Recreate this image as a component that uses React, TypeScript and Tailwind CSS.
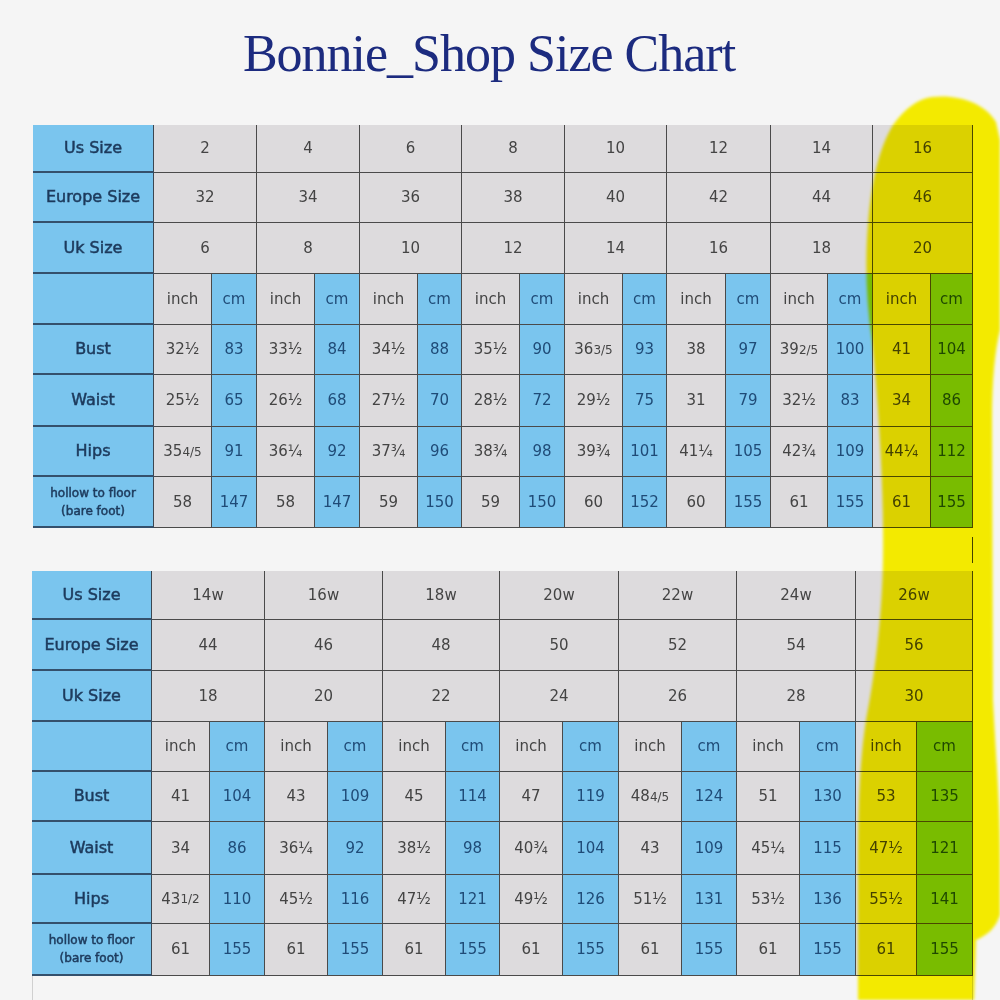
type Pair = [string, string]

type Chart = {
  us: string[]
  eu: string[]
  uk: string[]
  bust: Pair[]
  waist: Pair[]
  hips: Pair[]
  hollow: Pair[]
}

const top: Chart = {
  us: ['2', '4', '6', '8', '10', '12', '14', '16'],
  eu: ['32', '34', '36', '38', '40', '42', '44', '46'],
  uk: ['6', '8', '10', '12', '14', '16', '18', '20'],
  bust: [['32½', '83'], ['33½', '84'], ['34½', '88'], ['35½', '90'], ['36 3/5', '93'], ['38', '97'], ['39 2/5', '100'], ['41', '104']],
  waist: [['25½', '65'], ['26½', '68'], ['27½', '70'], ['28½', '72'], ['29½', '75'], ['31', '79'], ['32½', '83'], ['34', '86']],
  hips: [['35 4/5', '91'], ['36¼', '92'], ['37¾', '96'], ['38¾', '98'], ['39¾', '101'], ['41¼', '105'], ['42¾', '109'], ['44¼', '112']],
  hollow: [['58', '147'], ['58', '147'], ['59', '150'], ['59', '150'], ['60', '152'], ['60', '155'], ['61', '155'], ['61', '155']],
}

const bottom: Chart = {
  us: ['14w', '16w', '18w', '20w', '22w', '24w', '26w'],
  eu: ['44', '46', '48', '50', '52', '54', '56'],
  uk: ['18', '20', '22', '24', '26', '28', '30'],
  bust: [['41', '104'], ['43', '109'], ['45', '114'], ['47', '119'], ['48 4/5', '124'], ['51', '130'], ['53', '135']],
  waist: [['34', '86'], ['36¼', '92'], ['38½', '98'], ['40¾', '104'], ['43', '109'], ['45¼', '115'], ['47½', '121']],
  hips: [['43 1/2', '110'], ['45½', '116'], ['47½', '121'], ['49½', '126'], ['51½', '131'], ['53½', '136'], ['55½', '141']],
  hollow: [['61', '155'], ['61', '155'], ['61', '155'], ['61', '155'], ['61', '155'], ['61', '155'], ['61', '155']],
}

const LABEL =
  'flex items-center justify-center bg-[#7ac5ee] text-[#1d3a5c] text-[16px] [-webkit-text-stroke:0.5px_#1d3a5c] border-b-2 border-r border-b-[#34506c] border-r-[#3c4650]'
const GRAY = 'flex items-center justify-center bg-[#dddbdd] text-[#444] border-b border-r border-[#4a4a4a]'
const BLUE = 'flex items-center justify-center bg-[#7ac5ee] text-[#1f4b77] border-b border-r border-[#4a4a4a]'

// "36 3/5" -> 36 with a small 3/5 after it, as in the printed chart
function Val({ v }: { v: string }) {
  const [whole, frac] = v.split(' ')
  return (
    <>
      {whole}
      {frac && <span className="text-[12px]">{frac}</span>}
    </>
  )
}

function SizeTable({ data, grid }: { data: Chart; grid: string }) {
  const measure = (label: string, vals: Pair[]) => [
    <div key={label} className={LABEL}>
      {label}
    </div>,
    ...vals.flatMap(([inch, cm], i) => [
      <div key={label + i + 'i'} className={GRAY}>
        <Val v={inch} />
      </div>,
      <div key={label + i + 'c'} className={BLUE}>
        {cm}
      </div>,
    ]),
  ]

  const sizeRow = (label: string, vals: string[]) => [
    <div key={label} className={LABEL}>
      {label}
    </div>,
    ...vals.map((v, i) => (
      <div key={label + i} className={GRAY + ' col-span-2'}>
        {v}
      </div>
    )),
  ]

  return (
    <div className={'grid text-[15px] ' + grid}>
      {sizeRow('Us Size', data.us)}
      {sizeRow('Europe Size', data.eu)}
      {sizeRow('Uk Size', data.uk)}
      <div className={LABEL} />
      {data.us.flatMap((_, i) => [
        <div key={'u' + i + 'i'} className={GRAY}>
          inch
        </div>,
        <div key={'u' + i + 'c'} className={BLUE}>
          cm
        </div>,
      ])}
      {measure('Bust', data.bust)}
      {measure('Waist', data.waist)}
      {measure('Hips', data.hips)}
      <div className={LABEL + ' flex-col !text-[12px] leading-[18px] [-webkit-text-stroke:0.3px_#1d3a5c]'}>
        <span>hollow to floor</span>
        <span>(bare foot)</span>
      </div>
      {data.hollow.flatMap(([inch, cm], i) => [
        <div key={'h' + i + 'i'} className={GRAY}>
          {inch}
        </div>,
        <div key={'h' + i + 'c'} className={BLUE}>
          {cm}
        </div>,
      ])}
    </div>
  )
}

export default function App() {
  return (
    <div className="relative h-[1000px] w-[1000px] overflow-hidden bg-[#f5f5f5] font-['DejaVu_Sans',sans-serif]">
      <div className="flex justify-center pt-[28px] pr-[22px]">
        <h1 className="font-['Liberation_Serif',serif] text-[52px] leading-[52px] tracking-[-1px] text-[#1c2b7f]">
          Bonnie_Shop Size Chart
        </h1>
      </div>

      <div className="mt-[45px] ml-[33px] w-[940px]">
        <SizeTable
          data={top}
          grid="grid-cols-[121px_58px_45px_58px_45px_58px_44px_58px_45px_58px_44px_59px_45px_57px_45px_58px_42px] grid-rows-[48px_50px_51px_51px_50px_52px_50px_51px]"
        />
      </div>

      <div className="ml-[32px] flex h-[43px] w-[941px] items-center justify-end">
        <div className="h-[26px] w-px bg-[#444]" />
      </div>

      <div className="ml-[32px] w-[941px]">
        <SizeTable
          data={bottom}
          grid="grid-cols-[120px_58px_55px_63px_55px_63px_54px_63px_56px_63px_55px_63px_56px_61px_56px] grid-rows-[49px_51px_51px_50px_50px_53px_49px_52px]"
        />
        <div className="h-[30px] border-x border-[#d0d0d0]" />
      </div>

      {/* highlighter stroke over the last size column */}
      <svg
        className="pointer-events-none absolute inset-0 mix-blend-multiply"
        width="1000"
        height="1000"
        viewBox="0 0 1000 1000"
      >
        <defs>
          <filter id="soft">
            <feGaussianBlur stdDeviation="1.6" />
          </filter>
        </defs>
        <path
          filter="url(#soft)"
          fill="#fdf400"
          d="M932 97 C958 94 985 103 996 122 L1000 140 L1000 330 C995 350 992 380 992 420 L993 700 C996 760 1000 800 1000 860 L1000 915 C995 930 985 936 976 940 L974 1000 L858 1000 L858 880 C858 800 860 760 866 720 C874 680 882 620 883 560 C884 500 880 420 872 340 C866 300 865 260 868 225 C871 185 878 150 893 125 C905 108 918 99 932 97 Z"
        />
      </svg>
    </div>
  )
}
